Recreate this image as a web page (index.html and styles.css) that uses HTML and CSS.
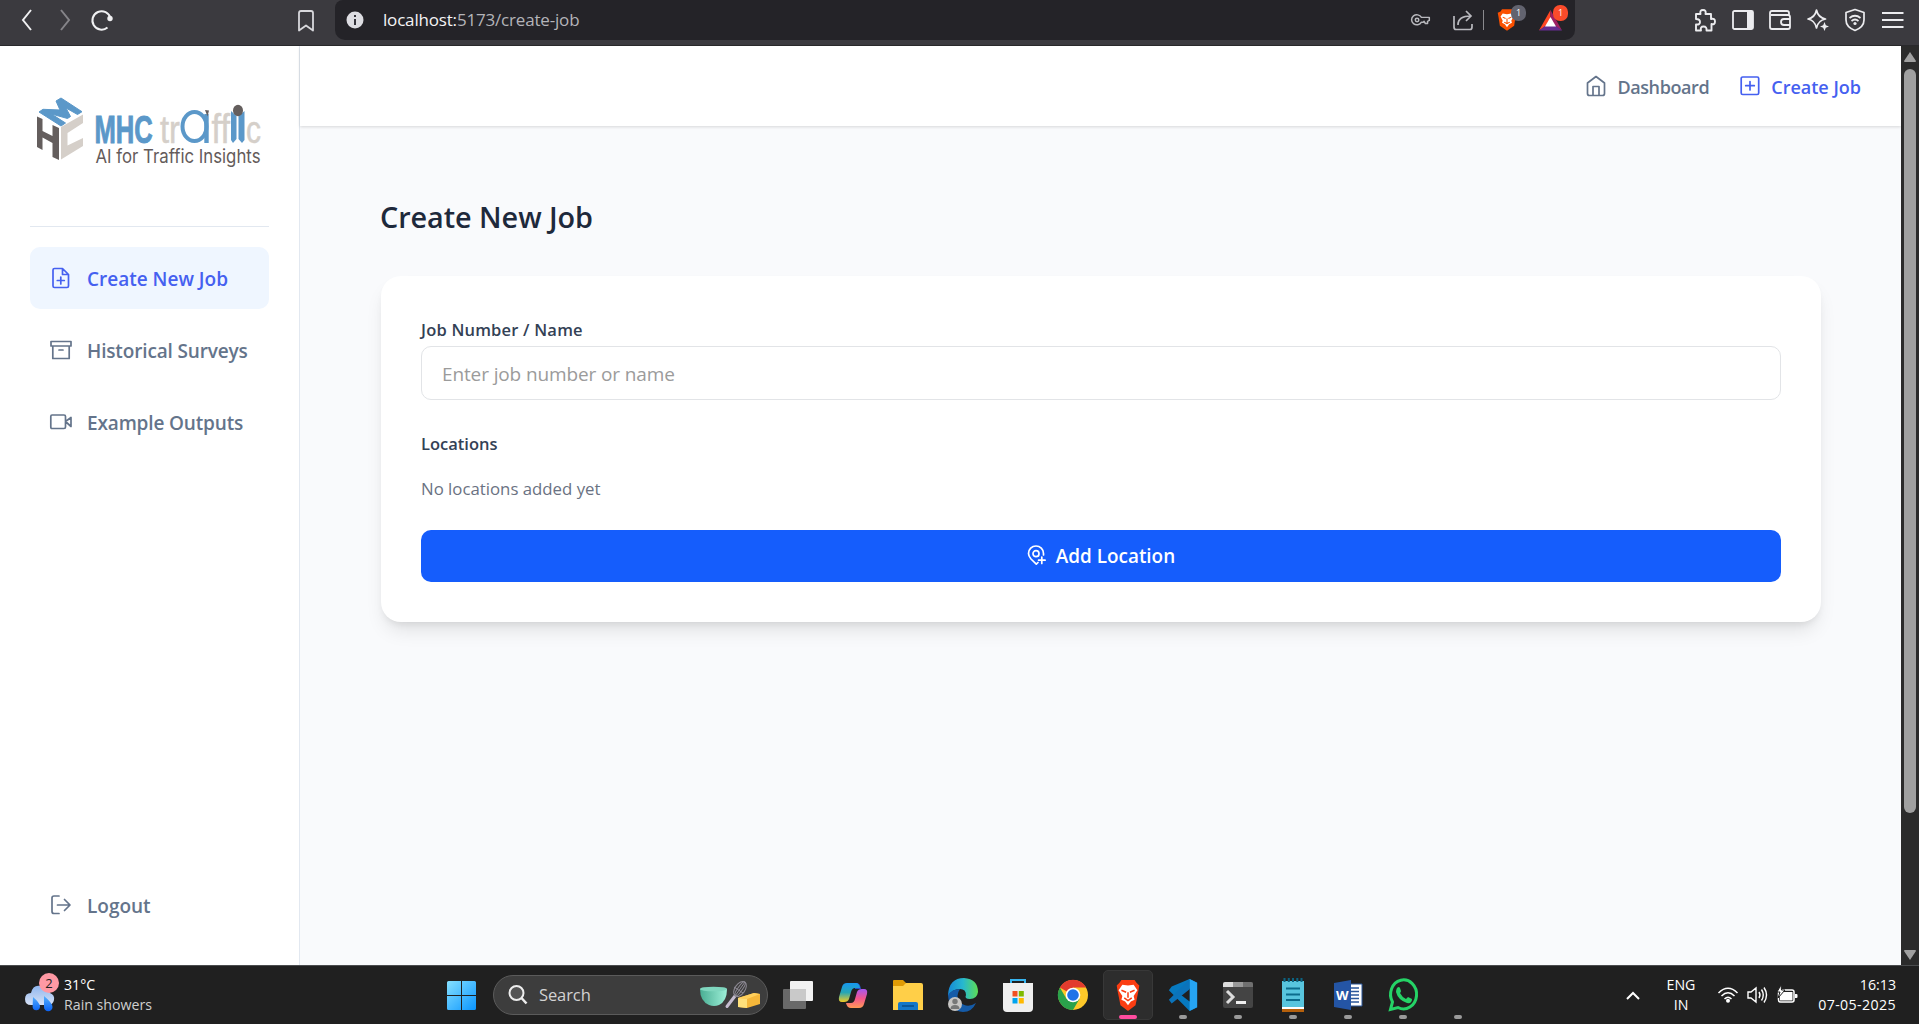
FILE: index.html
```html
<!DOCTYPE html>
<html lang="en">
<head>
<meta charset="utf-8">
<title>Create New Job</title>
<link rel="stylesheet" href="styles.css">
</head>
<body>
<div class="screen">
  <header class="browser">
    <div class="browser-nav">
      <svg width="12" height="22" viewBox="0 0 12 22"><path d="M10 1 2 11l8 10" fill="none" stroke="#f0f0f2" stroke-width="2"/></svg>
      <svg width="12" height="22" viewBox="0 0 12 22"><path d="M2 1l8 10-8 10" fill="none" stroke="#858489" stroke-width="2"/></svg>
      <svg width="24" height="24" viewBox="0 0 24 24"><path d="M17.500 19.500A9.200 9.200 0 1 1 20.500 10" fill="none" stroke="#f0f0f2" stroke-width="2"/><circle cx="20" cy="10.500" r="2.700" fill="#f0f0f2"/></svg>
    </div>
    <svg class="bookmark" width="16" height="22" viewBox="0 0 16 22"><path d="M1 3Q1 1 3 1H13Q15 1 15 3V20.500L8 15.500 1 20.500Z" fill="none" stroke="#d8d8dc" stroke-width="1.800" stroke-linejoin="round"/></svg>
    <div class="address">
      <svg width="18" height="18" viewBox="0 0 18 18"><circle cx="9" cy="9" r="8.500" fill="#dddde2"/><path d="M9 4v2M9 8v6" stroke="#33323a" stroke-width="2"/></svg>
      <div class="url"><b>localhost:</b>5173/create-job</div>
      <div class="address-tools">
        <svg width="20" height="14" viewBox="0 0 21 16"><g fill="none" stroke="#b9b9be" stroke-width="1.700"><path d="M11 5A6 5.700 0 1 0 11 10.500H13L14 9.500 15.500 12H18V9.500L20 8.500V5Z" stroke-linejoin="round"/><circle cx="6" cy="8" r="2"/></g></svg>
        <svg width="20" height="21" viewBox="0 0 20 21"><g fill="none" stroke="#b9b9be" stroke-width="1.700"><path d="M1 6V17Q1 19.500 3 19.500H17Q19 19.500 19 17V14M5 15C5 9 9 6 18 6M13 1l5 5-5 5"/></g></svg>
        <i class="bar-split"></i>
        <div class="ext">
          <svg width="20" height="24" viewBox="0 0 28 32"><path d="M7 1H21L23 4 27 6 26 11 24 24 14 31 4 24 2 11 1 6 5 4Z" fill="#fb5000"/><path d="M8 7l6 1 6-1 3 4-3 6 1 3-4 2-3 4-3-4-4-2 1-3-3-6Z" fill="#fff"/><path d="M8 12l4 2M20 12l-4 2M14 14v6M10 19l4 2 4-2" stroke="#fb5000" stroke-width="1.500" fill="none"/></svg>
          <span class="pill grey">1</span>
        </div>
        <div class="ext">
          <svg width="23" height="21" viewBox="0 0 23 21"><path d="M11.500 0 0 20.500 11.500 13Z" fill="#ff4724"/><path d="M11.500 0 23 20.500 11.500 13Z" fill="#9e1f63"/><path d="M0 20.500H23L11.500 12Z" fill="#662d91"/><path d="M11.500 7 6 16.500H17Z" fill="#fff"/></svg>
          <span class="pill red">1</span>
        </div>
      </div>
    </div>
    <div class="browser-tools">
      <svg width="22" height="23" viewBox="0 0 22 23"><path d="M2 5H6.500Q5.500 1 9 1T11.500 5H17V10Q21 9 21 12.500T17.500 15V21.500H12.500Q13 17.500 9.500 17.500T7 21.500H2V15.500Q6 16 6 13T2 10Z" fill="none" stroke="#ececef" stroke-width="1.900" stroke-linejoin="round"/></svg>
      <svg width="22" height="20" viewBox="0 0 22 20"><rect x="1" y="1" width="20" height="18" rx="1.500" fill="none" stroke="#ececef" stroke-width="1.800"/><path d="M15 1h6v18h-6z" fill="#ececef"/></svg>
      <svg width="22" height="20" viewBox="0 0 22 20"><g fill="none" stroke="#ececef" stroke-width="1.800"><path d="M20 5V3Q20 1 18 1H3Q1 1 1 3V17Q1 19 3 19H19Q21 19 21 17V7Q21 5 19 5H2"/><path d="M21 9H15Q12 9 12 12T15 15H21"/></g></svg>
      <svg width="22" height="22" viewBox="0 0 22 22"><path d="M9.500 1Q11 8.500 18.500 10 11 11.500 9.500 19 8 11.500 1 10 8 8.500 9.500 1Z" fill="none" stroke="#ececef" stroke-width="1.700" stroke-linejoin="round"/><path d="M17.500 13l1.300 3.200L22 17.500l-3.200 1.300L17.500 22l-1.300-3.200L13 17.500l3.200-1.300Z" fill="#ececef"/></svg>
      <svg width="22" height="24" viewBox="0 0 22 24"><g fill="none" stroke="#ececef" stroke-width="1.700"><path d="M11 1.500 20 4.500V12Q20 19 11 22.500 2 19 2 12V4.500Z" stroke-linejoin="round"/><path d="M5.500 10Q11 5.500 16.500 10M7.500 13Q11 10 14.500 13"/></g><circle cx="11" cy="15.500" r="1.600" fill="#ececef"/></svg>
      <svg width="22" height="16" viewBox="0 0 22 16"><path d="M0 1h21.500M0 8h21.500M0 15h21.500" stroke="#ececef" stroke-width="1.900"/></svg>
    </div>
  </header>

  <div class="viewport">
    <aside class="sidebar">
      <svg class="logo" width="226" height="74" viewBox="0 0 226 74">
        <path d="M3 15 7 12.300 24 13 20 4 25 1 46 14.700 41.500 17.500 30 11 34.500 19.500 31.500 21.500 15.500 17 29.500 26 25 29Z" fill="#5b98c9" stroke="#5b98c9"/>
        <path d="M1 19.500 6.500 22V34L16.500 39V28L23 31V63L16.500 60V46L6.500 40.500V53L1 50Z" fill="#645e5d"/>
        <path d="M25 30 47 17.500V26L31.500 36V48.500L47 41V49L25 62.500Z" fill="#d5cfc9"/>
        <g font-family="Liberation Sans, Arial, sans-serif">
          <text x="0" y="0" transform="translate(58.500 46) scale(.72 1)" font-size="39.500" font-weight="700" fill="#5b98c9" stroke="#5b98c9" stroke-width="1" textLength="81" lengthAdjust="spacingAndGlyphs">MHC</text>
          <text x="124" y="46" font-size="38" fill="#d5cfc9" stroke="#d5cfc9" stroke-width=".5" textLength="20" lengthAdjust="spacingAndGlyphs">tr</text>
          <text x="175.500" y="46" font-size="41" fill="#d5cfc9" stroke="#d5cfc9" stroke-width=".5" textLength="18.500" lengthAdjust="spacingAndGlyphs">ff</text>
          <text x="210" y="46" font-size="38" fill="#d5cfc9" stroke="#d5cfc9" stroke-width=".5" textLength="15" lengthAdjust="spacingAndGlyphs">c</text>
        </g>
        <ellipse cx="158.500" cy="29.500" rx="12" ry="14.500" fill="none" stroke="#5b98c9" stroke-width="4"/>
        <path d="M170.500 17v29" stroke="#5b98c9" stroke-width="4.400"/><path d="M169 13l4 .500-1.500 6z" fill="#645e5d"/>
        <path d="M195 14 200.500 19V42L197 46 195 43ZM208.500 14 202.500 19V42L206 46 208.500 43Z" fill="#5b98c9"/><ellipse cx="202" cy="13.500" rx="5" ry="5.700" fill="#645e5d"/>
        <text x="59.500" y="66" font-family="Inter, sans-serif" font-size="18.500" fill="#645b5a" textLength="165" lengthAdjust="spacingAndGlyphs">AI for Traffic Insights</text>
      </svg>
      <nav class="side-nav">
        <a class="side-link active"><svg width="22" height="22" viewBox="0 0 22 22"><path d="M4.500 1.500H12.500L18.500 7.500V19Q18.500 20.500 17 20.500H4.500Q3 20.500 3 19V3Q3 1.500 4.500 1.500ZM12.500 1.500V7.500H18.500M10.800 10v7M7.300 13.500h7"/></svg><span>Create New Job</span></a>
        <a class="side-link"><svg width="22" height="22" viewBox="0 0 22 22"><path d="M1 2.500H21V7H1ZM2.800 7V19.500H19.200V7M9 11h4"/></svg><span class="tight">Historical Surveys</span></a>
        <a class="side-link"><svg width="22" height="22" viewBox="0 0 22 22"><path d="M2 4H14Q15.500 4 15.500 5.500V16Q15.500 17.500 14 17.500H2Q.8 17.500.8 16V5.500Q.8 4 2 4ZM15.500 10.500l5.500-4v9Z"/></svg><span class="tight">Example Outputs</span></a>
      </nav>
      <a class="side-link logout"><svg width="22" height="22" viewBox="0 0 22 22"><path d="M9 2H4Q2 2 2 4V17.500Q2 19.500 4 19.500H9M7.500 11H19.500M14.500 5.500 20 11 14.500 16.500"/></svg><span>Logout</span></a>
    </aside>

    <div class="page">
      <header class="topbar">
        <a class="top-link home"><svg width="20" height="22" viewBox="0 0 20 22"><path d="M1.500 8 10 1.500 18.500 8V18.500Q18.500 20.500 16.500 20.500H3.500Q1.500 20.500 1.500 18.500ZM7 20V11.500H13V20"/></svg><span>Dashboard</span></a>
        <a class="top-link active"><svg width="20" height="22" viewBox="0 0 20 22"><rect x="1.200" y="2" width="17.500" height="17.500" rx="1.500"/><path d="M10 6.500v8.500M5.700 10.700h8.600"/></svg><span>Create Job</span></a>
      </header>
      <main class="content">
        <h1>Create New Job</h1>
        <section class="card">
          <label class="label job-label" for="job">Job Number / Name</label>
          <input id="job" type="text" placeholder="Enter job number or name">
          <h2 class="label second">Locations</h2>
          <p class="empty">No locations added yet</p>
          <button type="button"><svg width="20" height="22" viewBox="0 0 20 22"><path d="M11 17.500 9.300 19.200 4 14Q1.500 11 1.500 8.500A7.500 7.500 0 0 1 16.500 8.500V10"/><circle cx="9" cy="8.700" r="3"/><path d="M14.800 12v6.500M11.600 15.200h6.500"/></svg><span>Add Location</span></button>
        </section>
      </main>
    </div>

    <div class="scrollbar">
      <svg width="12" height="10" viewBox="0 0 12 10"><path d="M6 0 12 9Q12 10 11 10H1Q0 10 0 9Z" fill="#a0a0a0"/></svg>
      <i class="thumb"></i>
      <svg width="12" height="10" viewBox="0 0 12 10"><path d="M6 10 12 1Q12 0 11 0H1Q0 0 0 1Z" fill="#a0a0a0"/></svg>
    </div>
  </div>

  <footer class="taskbar">
    <div class="weather">
      <div class="cloud">
        <svg width="32" height="32" viewBox="0 0 32 32"><defs><linearGradient id="cl" x2="0" y2="1"><stop stop-color="#8fb6ef"/><stop offset="1" stop-color="#d6e1f5"/></linearGradient><linearGradient id="dr" x2="0" y2="1"><stop stop-color="#55b1ff"/><stop offset="1" stop-color="#0a62f5"/></linearGradient></defs><path d="M7 11Q9 2 17 4 25 3 26 11 31 13 30 18T24 23H7Q1 23 1 17T7 11Z" fill="url(#cl)"/><path d="M9 15Q16 21 16 24.500A3.700 3.700 0 0 1 8.600 24.500ZM20 14Q28.500 21 28.500 25A4.200 4.200 0 0 1 20 25Z" fill="url(#dr)"/></svg>
        <span class="count">2</span>
      </div>
      <div class="weather-text"><span>31°C</span><span class="dim">Rain showers</span></div>
    </div>
    <div class="dock">
      <svg class="start" width="29" height="29" viewBox="0 0 29 29"><defs><linearGradient id="win" x2="1" y2="1"><stop stop-color="#86e0ff"/><stop offset="1" stop-color="#0a95ff"/></linearGradient></defs><path d="M0 1.500Q0 0 1.500 0H14V14H0ZM15 0H27.500Q29 0 29 1.500V14H15ZM0 15H14V29H1.500Q0 29 0 27.500ZM15 15H29V27.500Q29 29 27.500 29H15Z" fill="url(#win)"/></svg>
      <div class="search">
        <svg width="20" height="20" viewBox="0 0 20 20"><circle cx="8.500" cy="8" r="7" fill="#555" stroke="#ededed" stroke-width="2"/><path d="M13.500 13l5 5.500" stroke="#ededed" stroke-width="2.500"/></svg>
        <span>Search</span>
        <svg class="bake" width="61" height="28" viewBox="0 0 61 28"><defs><linearGradient id="bowl"><stop stop-color="#49ad93"/><stop offset="1" stop-color="#9ef0d8"/></linearGradient></defs><path d="M0 8Q0 20 9 24 14 26 19 24 27 20 27 8Z" fill="url(#bowl)"/><ellipse cx="13.500" cy="8" rx="13.500" ry="2.300" fill="#7fd6be"/><path d="M27 25.500 35 15" stroke="#c5bccf" stroke-width="3" stroke-linecap="round"/><g fill="none" stroke="#8d8994"><ellipse cx="40" cy="8" rx="5" ry="8.500" transform="rotate(35 40 8)"/><ellipse cx="40" cy="8" rx="2.300" ry="8.500" transform="rotate(35 40 8)"/><path d="M35 15 45 1M34 6l9 6"/></g><path d="M38 17 54 12 60 13V23L47 27 38 26Z" fill="#f5b73a"/><path d="M38 17 54 12 60 13 47 18Z" fill="#ffd05c"/><path d="M38 17l9 1v9l-9-1Z" fill="#ffe07b"/></svg>
      </div>
      <div class="app"><svg width="30" height="28" viewBox="0 0 30 28"><rect x="7" width="23" height="20" rx="1" fill="#f2f2f2"/><rect y="8" width="23" height="20" rx="1" fill="#777" opacity=".85"/><path d="M7 8h16v12H7z" fill="#c9c9c9"/></svg></div>
      <div class="app"><svg width="30" height="27" viewBox="0 0 30 27"><defs><linearGradient id="c1" x2="0" y2="1"><stop stop-color="#1697ef"/><stop offset=".5" stop-color="#27a6b5"/><stop offset="1" stop-color="#f3cb22"/></linearGradient><linearGradient id="c2" x2="0" y2="1"><stop stop-color="#a556f0"/><stop offset=".5" stop-color="#f2568d"/><stop offset="1" stop-color="#ff9a55"/></linearGradient></defs><path d="M17 1H19Q22 1 23 7H17Z" fill="#2450c8"/><path d="M9 1H18Q21 1 22 6H17Q14 6 13 10L11 17Q10 20 6 20H4Q0 20 1 15L4 5Q5 1 9 1Z" fill="url(#c1)"/><path d="M21 26H13Q9 26 8 21H13Q16 21 17 17L19 10Q20 7 24 7H26Q30 7 29 12L26 22Q25 26 21 26Z" fill="url(#c2)"/></svg></div>
      <div class="app"><svg width="30" height="30" viewBox="0 0 30 30"><path d="M0 1Q0 0 1 0H10L13 3V9H0Z" fill="#e09b05"/><path d="M0 6H10L13 3H28Q30 3 30 5V30H0Z" fill="#ffcf48"/><path d="M5 30V24Q5 22 7 22H23Q25 22 25 24V30Z" fill="#1377c9"/><path d="M9 26h12" stroke="#074d8a" stroke-width="1.500"/></svg></div>
      <div class="app"><svg width="32" height="34" viewBox="0 0 32 34"><defs><linearGradient id="edge"><stop stop-color="#1689d7"/><stop offset=".5" stop-color="#27b8cf"/><stop offset="1" stop-color="#5ddd54"/></linearGradient></defs><path d="M1 17Q2 0 17 0 31 1 31 14 30 21 23 21 17 21 19 17 19 11 13 11 5 11 1 18Z" fill="url(#edge)"/><path d="M1 17Q5 11 13 11 8 18 13 24 20 31 29 25 25 34 16 34 2 33 1 17Z" fill="#155ba8"/><circle cx="8" cy="26" r="7" fill="#c7c5c3"/><circle cx="8" cy="23.500" r="2.700" fill="#777"/><path d="M3.500 31Q3.500 27 8 27T12.500 31Z" fill="#777"/></svg></div>
      <div class="app"><svg width="30" height="34" viewBox="0 0 30 34"><path d="M8 7V2H22V7" fill="none" stroke="#37b5f0" stroke-width="2"/><path d="M0 5H30V30Q30 34 26 34H4Q0 34 0 30Z" fill="#efefef"/><path d="M9.500 13h5v5.500h-5z" fill="#f25022"/><path d="M15.800 13h5v5.500h-5z" fill="#7fba00"/><path d="M9.500 20h5v5.500h-5z" fill="#00a4ef"/><path d="M15.800 20h5v5.500h-5z" fill="#ffb900"/></svg></div>
      <div class="app"><svg width="30" height="30" viewBox="0 0 32 32"><circle cx="16" cy="16" r="16" fill="#fdc829"/><path d="M16 16 2 8A16 16 0 0 1 30 8H16Z" fill="#e23b2e"/><path d="M2 8A16 16 0 0 0 16 32L23 20 9 20Z" fill="#2aa24b"/><circle cx="16" cy="16" r="7.800" fill="#fff"/><circle cx="16" cy="16" r="6.200" fill="#1f73e8"/></svg></div>
      <div class="app current"><svg width="26" height="32" viewBox="0 0 26 34"><path d="M6 1H20L22 4 25 7 24 13 21 28 13 34 5 28 2 13 1 7 4 4Z" fill="#fb3d12"/><path d="M7 6l6 1 6-1 4 6-4 6 1 4-4 2-3 4-3-4-4-2 1-4-4-6Z" fill="#fff"/><path d="M6 12l5 2M20 12l-5 2M13 14v6M9 20l4 3 4-3" stroke="#fb3d12" stroke-width="1.600" fill="none"/></svg></div>
      <div class="app open"><svg width="30" height="32" viewBox="0 0 30 34"><path d="M22 0 30 4V30L22 34 0 12 3 8Z" fill="#0779bf"/><path d="M22 0 30 4V30L22 34Z" fill="#26a4f2"/><path d="M22 10V24L13 17Z" fill="#202020"/><path d="M3 26 22 11V0L0 22Z" fill="#0b73ba"/></svg></div>
      <div class="app open"><svg width="30" height="26" viewBox="0 0 30 26"><rect width="30" height="26" rx="2" fill="#444"/><path d="M0 5V2Q0 0 2 0H10V5Z" fill="#ddd"/><path d="M10 0h10v5H10z" fill="#999"/><path d="M20 0h8q2 0 2 2v3H20z" fill="#707070"/><path d="M4 9l6 6-6 6" stroke="#ddd" stroke-width="3" fill="none"/><path d="M13 19h10v3H13z" fill="#eee"/></svg></div>
      <div class="app open"><svg width="22" height="34" viewBox="0 0 22 34"><path d="M0 3h22v26H0z" fill="#58c5de"/><path d="M0 29h22v2H0z" fill="#fff"/><path d="M0 31h22v3H0z" fill="#b5600c"/><path d="M2.500 0v4M6.800 0v4M11 0v4M15.300 0v4M19.500 0v4" stroke="#0b6483" stroke-width="2"/><path d="M4 10.500h14M4 16.500h14M4 22h14" stroke="#0c6c8c" stroke-width="2"/></svg></div>
      <div class="app open"><svg width="28" height="30" viewBox="0 0 28 30"><path d="M15 4h13v22H15z" fill="#fff" stroke="#2b579a"/><path d="M16 8h9M16 11.500h9M16 15h9M16 18.500h9M16 22h9" stroke="#2b579a" stroke-width="1.500"/><path d="M0 3 17 0V30L0 27Z" fill="#2455a5"/><text x="2" y="20" font-family="Open Sans, sans-serif" font-size="13" font-weight="700" fill="#fff">W</text></svg></div>
      <div class="app open"><svg width="30" height="34" viewBox="0 0 30 34"><path d="M2.500 31.500 4.500 24A13 14.500 0 1 1 10 29.500Z" fill="none" stroke="#25d366" stroke-width="3"/><path d="M9 10Q11 8 12 10L13 13Q13 14 12 15 14 19 18 21L20 19 24 21Q24 26 19 25 10 22 8 14 8 12 9 10Z" fill="#25d366"/></svg></div>
      <div class="app open"></div>
    </div>
    <div class="tray">
      <svg width="14" height="9" viewBox="0 0 14 9"><path d="M1 8l6-6 6 6" fill="none" stroke="#fff" stroke-width="2"/></svg>
      <div class="lang"><span>ENG</span><span>IN</span></div>
      <div class="status">
        <svg width="20" height="16" viewBox="0 0 20 16"><g fill="none" stroke="#fff" stroke-width="1.500"><path d="M.5 6Q10-3.500 19.500 6M3.500 9Q10 2.500 16.500 9M6.500 12Q10 8.500 13.500 12"/></g><circle cx="10" cy="13.700" r="2" fill="#fff"/></svg>
        <svg width="21" height="18" viewBox="0 0 21 18"><g fill="none" stroke="#fff" stroke-width="1.400"><path d="M1 6H4L9 2V16L4 12H1ZM12 6Q14 9 12 12M14.500 3.500Q18 9 14.500 14.500M17 1.500Q22 9 17 16.500"/></g></svg>
        <svg width="21" height="18" viewBox="0 0 21 18"><rect x="1.500" y="4" width="15.500" height="12" rx="2" fill="none" stroke="#fff" stroke-width="1.500"/><path d="M3 6h12.500v8.500H3zM18 8h1.500q1 0 1 1v2q0 1-1 1H18z" fill="#fff"/><path d="M4-1 0 6H3L1 12 8 4H4.500Z" fill="#fff" stroke="#202020"/></svg>
      </div>
      <div class="clock"><span>16:13</span><span class="date">07-05-2025</span></div>
    </div>
  </footer>
</div>
</body>
</html>
```
FILE: styles.css
```css
* { box-sizing: border-box; }
body { margin: 0; font-family: "Open Sans", "Noto Sans", sans-serif; }
svg { display: block; flex: none; overflow: visible; }
span { white-space: nowrap; }
.screen { width: 1919px; height: 1024px; display: flex; flex-direction: column; overflow: hidden; }

/* Browser toolbar */
.browser { height: 46px; flex: none; display: flex; background: #3b3a3f; border-bottom: 1px solid #29292c; }
.browser-nav { width: 298px; height: 40px; padding-left: 21px; display: flex; align-items: center; gap: 26px; flex: none; }
.browser-nav svg:last-child { margin-left: -7px; }
.bookmark { margin: 10px 21px 0 0; }
.address { width: 1240px; height: 40px; padding-left: 11px; background: #242328; border-radius: 8px 0 10px 10px; display: flex; align-items: center; flex: none; }
.url { margin: -2px 0 0 19px; font-size: 17px; color: #b4b4b9; white-space: nowrap; letter-spacing: -.18px; }
.url b { font-weight: 400; color: #f4f4f6; }
.address-tools { margin-left: auto; height: 40px; display: flex; align-items: center; padding-right: 13px; }
.address-tools > svg + svg { margin-left: 22px; }
.bar-split { width: 1px; height: 20px; background: #8a8a8e; margin: 0 13px 0 10px; }
.ext { position: relative; }
.ext + .ext { margin-left: 22px; }
.pill { position: absolute; left: 14px; top: -5px; width: 15px; height: 16px; border-radius: 7px; color: #fff; font-size: 9px; line-height: 16px; text-align: center; }
.grey { top: -3px; background: #62636f; }
.red { background: #fb4b2b; }
.browser-tools { height: 40px; margin-left: 119px; display: flex; align-items: center; gap: 15.500px; }

/* Application */
.viewport { height: 919px; flex: none; display: flex; background: #f9fafc; }
.sidebar { width: 300px; flex: none; display: flex; flex-direction: column; background: #fff; border-right: 1px solid #e2e8f0; padding: 0 30px; }
.logo { margin: 51px 0 0 6px; }
.side-nav { margin-top: 55px; border-top: 1px solid #e2e8f0; padding-top: 20px; display: flex; flex-direction: column; gap: 10px; }
.side-link { height: 62px; padding-left: 20px; display: flex; align-items: center; gap: 15px; border-radius: 10px; color: #64748b; font-size: 19px; font-weight: 600; }
.side-link span { padding-top: 1px; }
.tight { letter-spacing: -.15px; }
.side-link svg, .top-link svg, button svg { fill: none; stroke: currentColor; stroke-width: 1.700; stroke-linejoin: round; stroke-linecap: round; }
.side-link.active { background: #eff6ff; color: #4560f0; }
.logout { margin-top: auto; margin-bottom: 29px; }
.page { width: 1601px; flex: none; }
.topbar { height: 80px; display: flex; align-items: center; justify-content: flex-end; gap: 31px; padding-right: 40px; background: #fff; box-shadow: 0 1px 3px rgb(0 0 0 / .14); }
.top-link { display: flex; align-items: center; gap: 11px; color: #64748b; font-size: 18px; font-weight: 600; }
.top-link span { padding-top: 2px; }
.home { letter-spacing: -.4px; }
.top-link.active { color: #4560f0; }
.content { padding: 61px 80px 0 81px; }
h1 { height: 60px; margin: 0 0 29px -1px; color: #1e293b; font-size: 28.800px; font-weight: 600; line-height: 60px; letter-spacing: -.05px; }
.card { height: 346px; padding: 40px; background: #fff; border-radius: 20px; box-shadow: 0 12px 19px -4px rgb(0 0 0 / .1), 0 5px 8px -4px rgb(0 0 0 / .1); }
.label { display: block; height: 30px; margin: 0; color: #334155; font-size: 16.500px; font-weight: 600; line-height: 27px; }
.job-label { letter-spacing: .2px; }
input { display: block; width: 100%; height: 54px; padding: 1px 20px 0; border: 1px solid #e2e4e7; border-radius: 10px; background: #fff; font: 400 19px "Open Sans", sans-serif; letter-spacing: -.12px; }
input::placeholder { color: #9b9b9b; opacity: 1; }
.second { margin-top: 30px; }
.empty { margin: 14px 0 0; height: 30px; font-size: 16.800px; line-height: 30px; color: #6a7282; }
button { display: flex; width: 100%; height: 52px; margin-top: 26px; padding: 0; border: 0; border-radius: 10px; background: #155dfc; color: #fff; align-items: center; justify-content: center; gap: 9px; font: 600 18.900px "Open Sans", sans-serif; }
.scrollbar { width: 18px; flex: none; background: #2b2b2b; display: flex; flex-direction: column; align-items: center; padding: 6px 0 5px; }
.thumb { width: 12px; height: 744px; margin-top: 7px; border-radius: 6px; background: #a0a0a0; }
.scrollbar svg:last-child { margin-top: auto; }

/* Taskbar */
.taskbar { height: 59px; flex: none; display: flex; background: #202020; border-top: 1px solid #4a4c4e; color: #fff; font-size: 14.200px; line-height: 20px; }
.weather { width: 447px; display: flex; align-items: flex-start; padding: 9px 0 0 24px; }
.cloud { position: relative; padding-top: 7px; }
.count { position: absolute; left: 15px; top: -2px; width: 20px; height: 20px; border-radius: 10px; background: #ff99a4; color: #222; text-align: center; font-size: 13px; line-height: 20px; }
.weather-text { display: flex; flex-direction: column; margin-left: 8px; }
.dim { color: #cfcfcf; }
.dock { width: 1038px; display: flex; align-items: center; flex: none; }
.search { width: 275px; height: 40px; margin: 0 2px 0 17px; border: 1px solid #5b5b5b; border-radius: 20px; background: #3d3d3d; display: flex; align-items: center; padding: 0 6px 0 14px; flex: none; }
.search span { margin-left: 11px; font-size: 16.500px; color: #d2d2d2; letter-spacing: -.1px; }
.bake { margin-left: auto; }
.app { position: relative; width: 55px; height: 50px; flex: none; display: flex; align-items: center; justify-content: center; }
.current { width: 50px; margin: 0 2.500px; background: #2d2d2d; border: 1px solid #383838; border-radius: 5px; }
.current::after, .open::after { content: ""; position: absolute; bottom: 1px; left: 50%; width: 8px; height: 4px; margin-left: -4px; border-radius: 2px; background: #9a9a9a; }
.current::after { bottom: 0; width: 18px; margin-left: -9px; background: #ff4c9f; }
.tray { margin-left: 141px; width: 270px; display: flex; align-items: center; flex: none; }
.lang { width: 40px; margin-left: 21px; display: flex; flex-direction: column; align-items: center; }
.status { display: flex; align-items: center; gap: 9px; margin-left: 17px; }
.clock { margin-left: auto; display: flex; flex-direction: column; align-items: flex-end; }
.date { letter-spacing: .38px; }
```
